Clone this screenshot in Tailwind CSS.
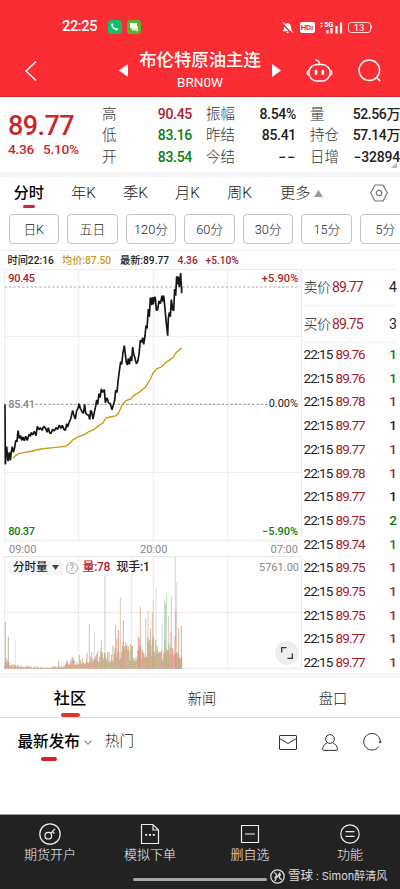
<!DOCTYPE html>
<html lang="zh-CN">
  <head>
    <meta charset="UTF-8" />
    <meta name="viewport" content="width=device-width, initial-scale=1.0" />
    <title>布伦特原油主连</title>
    <script src="https://cdn.jsdelivr.net/npm/@tailwindcss/browser@4"></script>
  </head>

  <body class="bg-white">
    <div class="w-[400px] h-[889px] flex flex-col overflow-hidden whitespace-nowrap text-[#222] font-[Roboto,'Noto_Sans_CJK_SC',sans-serif]">
      <!-- Header -->
      <header class="h-[97px] shrink-0 bg-[#fa2d34] text-white border-b border-[#d9252c]">
        <!-- Status bar -->
        <div class="h-[37px] pt-[17px] pl-[62px] pr-[28px] flex items-center">
          <span class="text-[14.5px] leading-5 font-medium tracking-[-0.35px] w-[46px]">22:25</span>
          <svg class="w-[14px] h-[14px]" viewBox="0 0 14 14">
            <rect width="14" height="14" rx="3.5" fill="#12c06a" />
            <path d="M4.3 3.2l1.3 1.6-.7 1.1c.5 1.1 1.3 1.9 2.5 2.5l1.1-.7 1.7 1.3c-.3 1.2-1.1 1.6-2.1 1.3C5.6 9.500 3.900 7.800 3.200 5.200 3 4.200 3.500 3.400 4.300 3.200z" fill="#fff" />
          </svg>
          <svg class="w-[14px] h-[14px] ml-[5px]" viewBox="0 0 14 14">
            <rect width="14" height="14" rx="3.5" fill="#55b82c" />
            <path d="M5 6h6v4.500h-.5V12L9 10.500H5z" fill="#d5f0c8" />
            <path d="M3 3h7v5H5.500L4 9.500V8H3z" fill="#fff" />
          </svg>
          <div class="ml-auto flex items-center">
            <svg class="w-[13px] h-[13px] mr-[6px]" viewBox="0 0 13 13">
              <path d="M1.500 10.300c1-1 1.500-2 1.500-4 0-2.300 1.400-4 3.500-4.200C8.600 2.300 10 4 10 6.300c0 2 .5 3 1.500 4z M5 11h3l-1.500 1.500z" fill="#fff" />
              <path d="M1 2.200l10 10.500" stroke="#fa2d34" stroke-width="1.600" />
              <path d="M1.500 1l10.500 10.500" stroke="#fff" />
            </svg>
            <span class="w-[15px] h-[11px] rounded-[2px] bg-white text-[#fa2d34] text-[8px] leading-[11px] font-bold tracking-[-0.4px] text-center mr-[5px]">HD<span class="text-[5px]">2</span></span>
            <svg class="w-[23px] h-[13px] mr-[5px]" viewBox="0 0 23 13">
              <path d="M0 3l1.500-2L3 3zM0 4.500l1.500 2 1.500-2z" fill="#fff" />
              <text x="4" y="6" font-size="7.500" font-weight="700" fill="#fff">5G</text>
              <path d="M7.500 12.500V9M11.500 12.500V7M16.500 12.500V5M21 12.500V1.500" stroke="#fff" stroke-width="2.200" />
            </svg>
            <span class="w-[23px] h-[11px] rounded-[3px] border border-white/80 text-[9.500px] leading-[9.500px] text-center">13</span>
            <span class="w-[1.500px] h-[4px] bg-white/80 rounded-r"></span>
          </div>
        </div>
        <!-- Title bar -->
        <div class="h-[59px] flex items-center pl-[25px] pr-[19px] pt-[8px]">
          <svg class="w-[12px] h-[20px]" viewBox="0 0 12 20" fill="none" stroke="#fff" stroke-width="1.500">
            <path d="M11 .5L1 10l10 9.500" />
          </svg>
          <svg class="w-[9px] h-[13px] ml-[82px]" viewBox="0 0 9 13"><path d="M9 0v13L0 6.500z" fill="#fff" /></svg>
          <div class="w-[144px] flex flex-col items-center -mt-[2px]">
            <h1 class="text-[17.400px] leading-6 font-medium">布伦特原油主连</h1>
            <p class="text-[13.500px] leading-[19px] mt-px">BRN0W</p>
          </div>
          <svg class="w-[9px] h-[13px]" viewBox="0 0 9 13"><path d="M0 0v13l9-6.500z" fill="#fff" /></svg>
          <svg class="w-[27px] h-[25px] ml-auto" viewBox="0 0 27 25" fill="none" stroke="#fff" stroke-width="1.500">
            <rect x="3" y="6.500" width="21" height="16.500" rx="8" />
            <path d="M3 12.500c-1.200 0-1.700 1-1.700 2.300s.5 2.300 1.700 2.300M24 12.500c1.200 0 1.700 1 1.700 2.300s-.5 2.300-1.700 2.300M13.500 6.500c0-3-1.200-4.200-4.200-4.700" />
            <path d="M10 12.700v3M16.800 12.700v3" stroke-width="2.600" stroke-linecap="round" />
          </svg>
          <svg class="w-[23px] h-[23px] ml-[25px]" viewBox="0 0 23 23" fill="none" stroke="#fff" stroke-width="1.500">
            <circle cx="11.300" cy="11.300" r="10.300" />
            <path d="M18.500 18.500l3.800 3.800" />
          </svg>
        </div>
      </header>

      <!-- Quote summary -->
      <section class="h-[76px] shrink-0 flex relative border-b border-[#f5f5f5]">
        <div class="w-[102px] pl-[8px] pt-[15px] text-[#c8282d]">
          <div class="text-[27px] leading-[28px] font-medium tracking-[-0.6px]">89.77</div>
          <div class="text-[13.700px] leading-[18px] font-medium tracking-[-0.3px] flex gap-[9px]"><span>4.36</span><span>5.10%</span></div>
        </div>
        <dl class="w-[90px] pt-[6.500px] grid grid-cols-[auto_auto] justify-between content-start text-[14px] leading-[21.500px]">
          <dt class="font-light text-[14.500px] text-[#333]">高</dt><dd class="text-right text-[#b3202a] font-medium tracking-[-0.3px]">90.45</dd>
          <dt class="font-light text-[14.500px] text-[#333]">低</dt><dd class="text-right text-[#0b7d14] font-medium tracking-[-0.3px]">83.16</dd>
          <dt class="font-light text-[14.500px] text-[#333]">开</dt><dd class="text-right text-[#0b7d14] font-medium tracking-[-0.3px]">83.54</dd>
        </dl>
        <dl class="w-[90px] ml-[14px] pt-[6.500px] grid grid-cols-[auto_auto] justify-between content-start text-[14px] leading-[21.500px]">
          <dt class="font-light text-[14.500px] text-[#333]">振幅</dt><dd class="text-right font-medium tracking-[-0.3px]">8.54%</dd>
          <dt class="font-light text-[14.500px] text-[#333]">昨结</dt><dd class="text-right font-medium tracking-[-0.3px]">85.41</dd>
          <dt class="font-light text-[14.500px] text-[#333]">今结</dt><dd class="text-right font-medium tracking-[1px]">−−</dd>
        </dl>
        <dl class="w-[90px] ml-[14px] pt-[6.500px] grid grid-cols-[auto_auto] justify-between content-start text-[14px] leading-[21.500px]">
          <dt class="font-light text-[14.500px] text-[#333]">量</dt><dd class="text-right font-medium tracking-[-0.4px]">52.56万</dd>
          <dt class="font-light text-[14.500px] text-[#333]">持仓</dt><dd class="text-right font-medium tracking-[-0.4px]">57.14万</dd>
          <dt class="font-light text-[14.500px] text-[#333]">日增</dt><dd class="text-right font-medium tracking-[-0.2px]">−32894</dd>
        </dl>
        <svg class="absolute right-[3px] bottom-[4px] w-[6px] h-[6px]" viewBox="0 0 6 6"><path d="M6 0v6H0z" fill="#bbb" /></svg>
      </section>
      <div class="h-[4px] shrink-0 bg-[#f6f6f6]"></div>

      <!-- Period tabs -->
      <nav class="h-[37px] shrink-0 flex items-start pl-[13.500px] pt-[5px] text-[15.300px] leading-[22px] font-light text-[#222]">
        <div class="w-[57.500px] font-medium text-black">
          <div>分时</div>
          <div class="w-[12px] h-[3px] rounded-full bg-[#d8232c] ml-[9.500px] mt-[1px]"></div>
        </div>
        <span class="w-[52px]">年K</span>
        <span class="w-[52px]">季K</span>
        <span class="w-[52px]">月K</span>
        <span class="w-[53px]">周K</span>
        <span>更多</span>
        <svg class="w-[9px] h-[7px] mt-[8px] ml-[3px]" viewBox="0 0 9 7"><path d="M4.500 0L9 7H0z" fill="#999" /></svg>
        <svg class="w-[18px] h-[18px] ml-auto mr-[12px] mt-[2px]" viewBox="0 0 18 18" fill="none" stroke="#777" stroke-width="1.200">
          <path d="M5 1h8l4.300 8L13 17H5L.7 9z" stroke-linejoin="round" />
          <circle cx="9" cy="9" r="2.700" />
        </svg>
      </nav>
      <div class="h-[36px] shrink-0 flex items-start gap-[8px] pl-[8.500px] text-[12.700px] leading-[29px] text-center font-light">
        <span class="w-[50.600px] h-[30px] shrink-0 border border-[#c4c4c4] rounded-[4px]">日K</span>
        <span class="w-[50.600px] h-[30px] shrink-0 border border-[#c4c4c4] rounded-[4px]">五日</span>
        <span class="w-[50.600px] h-[30px] shrink-0 border border-[#c4c4c4] rounded-[4px]">120分</span>
        <span class="w-[50.600px] h-[30px] shrink-0 border border-[#c4c4c4] rounded-[4px]">60分</span>
        <span class="w-[50.600px] h-[30px] shrink-0 border border-[#c4c4c4] rounded-[4px]">30分</span>
        <span class="w-[50.600px] h-[30px] shrink-0 border border-[#c4c4c4] rounded-[4px]">15分</span>
        <span class="w-[50.600px] h-[30px] shrink-0 border border-[#c4c4c4] rounded-[4px]">5分</span>
      </div>
      <div class="h-[19px] shrink-0 border-t border-[#eee] flex items-center pl-[7.500px] pt-[2px] text-[10.200px] leading-4 font-medium">
        <span class="w-[54.500px]">时间22:16</span>
        <span class="w-[58px] text-[#c99a1c]">均价:87.50</span>
        <span class="w-[57.500px]">最新:89.77</span>
        <span class="w-[28px] text-[#a52228]">4.36</span>
        <span class="text-[#a52228]">+5.10%</span>
      </div>

      <!-- Charts and trade list -->
      <section class="h-[404px] shrink-0 flex">
        <div class="w-[302px]">
          <svg class="block w-[302px] h-[272px]" viewBox="0 12 906 816" fill="none">
            <path d="M14 13.500H906M14 214H906M14 418H906M14 622H906M14 826H906M14 12V828M236 12V828M460 12V828M683 12V828M904.500 12V828" stroke="#ececec" stroke-width="3" />
            <path d="M14 66H896" stroke="#b3a893" stroke-width="3" stroke-dasharray="7 6" />
            <path d="M104 418H896" stroke="#fff" stroke-width="4" />
            <path d="M106 418H806" stroke="#8c8c8c" stroke-width="3" stroke-dasharray="7 6" />
            <path d="M38 580L48 571 56 566 75 562 98 558 122 552 160 548 196 544 207 537 218 525 236 515 254 508 268 499 283 493 298 481 310 473 317 459 330 456 347 453 356 444 366 420 378 407 392 402 402 391 417 382 436 367 450 344 460 323 471 311 484 306 498 292 520 277 528 263 545 248" stroke="#c59a14" stroke-width="4" />
            <path d="M15 418L16 598 20 545 24 588 28 562 31 586 34 560 37 545 40 562 44 548 47 527 51 530 54 497 58 520 62 512 65 526 69 516 73 527 77 514 82 526 87 508 91 514 94 502 98 510 103 499 108 512 112 484 117 494 121 488 126 496 131 484 137 490 141 502 145 488 149 504 153 505 158 493 163 498 168 488 173 493 178 480 183 490 187 481 192 493 196 496 200 476 203 486 208 470 212 462 218 436 222 452 226 462 230 437 234 430 237 416 241 430 246 440 250 445 254 418 257 444 262 450 266 450 269 464 272 436 275 441 279 462 283 442 287 424 290 405 293 418 297 386 300 398 304 372 308 382 313 374 316 413 321 398 326 414 331 416 336 434 340 420 344 406 347 376 351 382 354 350 358 318 362 290 365 298 369 262 373 242 376 268 379 292 382 300 385 280 388 298 392 274 395 288 398 246 401 266 405 280 409 296 413 290 417 268 421 226 425 232 428 218 431 238 435 213 438 182 441 190 445 132 448 155 451 98 455 120 457 96 460 118 463 96 466 98 469 136 473 134 477 108 481 116 486 92 489 110 491 92 494 120 498 166 503 212 505 160 508 142 511 155 514 104 518 134 521 137 524 72 527 92 530 34 533 58 535 35 538 66 542 24 545 85 545 66" stroke="#151515" stroke-width="5" stroke-linejoin="bevel" />
            <g font-size="33" font-weight="500">
              <text x="25" y="51" fill="#b3202a" textLength="80">90.45</text>
              <text x="785" y="51" fill="#b3202a" textLength="110">+5.90%</text>
              <text x="25" y="428" fill="#888" textLength="80">85.41</text>
              <text x="806" y="426" fill="#222" font-weight="400" textLength="88">0.00%</text>
              <text x="25" y="810" fill="#0b7d14" textLength="80">80.37</text>
              <text x="786" y="810" fill="#0b7d14" textLength="108">−5.90%</text>
            </g>
          </svg>
          <div class="h-[15px] pl-[9px] pr-[4px] pt-[2px] flex items-center text-[11px] leading-[15px] text-[#888]">
            <span class="w-[131px]">09:00</span><span>20:00</span><span class="ml-auto">07:00</span>
          </div>
          <div class="relative h-[113px]">
            <svg class="block w-[302px] h-[113px]" viewBox="0 288 906 339" fill="none">
              <path d="M14 289.500H906M14 457H906M14 625H906M14 288V627M236 288V627M460 288V627M683 288V627M904.500 288V627" stroke="#e9e9e9" stroke-width="3" />
              <g id="volume"></g>
            </svg>
            <div class="absolute inset-x-0 top-[4px] h-[15px] pl-[9px] pr-[3px] flex items-center text-[12px] leading-[15px] font-medium">
              <span class="w-[53.500px] h-[15px] pl-[4px] rounded-[2px] bg-[#f5f5f5] flex items-center justify-between pr-[4px] text-[11.500px] text-[#222]">分时量
                <svg class="w-[7px] h-[5px]" viewBox="0 0 7 5"><path d="M0 0h7L3.500 5z" fill="#444" /></svg>
              </span>
              <span class="w-[12px] h-[12px] ml-[3.500px] rounded-full border border-[#aaa] text-[9px] leading-[10.500px] font-normal text-[#888] text-center">?</span>
              <span class="ml-[4.500px] w-[34px] text-[#b3202a] tracking-[-0.3px]">量:78</span>
              <span class="tracking-[-0.2px]">现手:1</span>
              <span class="ml-auto font-normal text-[11px] text-[#888]">5761.00</span>
            </div>
            <div class="absolute right-[3px] bottom-[4px] w-[24px] h-[24px] rounded-full bg-[#eee] flex items-center justify-center">
              <svg class="w-[12px] h-[12px]" viewBox="0 0 12 12" fill="none" stroke="#333" stroke-width="1.300"><path d="M.7 5.500V.7h4.800M11.300 6.500v4.800H6.500" /></svg>
            </div>
          </div>
        </div>

        <!-- Bid, ask and ticks -->
        <div class="w-[98px] pl-[1.500px] pr-[4px]">
          <div class="h-[37px] border-y border-[#f0f0f0] flex items-center text-[14px] tracking-[-0.9px]">
            <span class="w-[28.500px] font-light tracking-[-0.5px]">卖价</span><span class="text-[#a52228]">89.77</span><span class="ml-auto">4</span>
          </div>
          <div class="h-[37px] border-b border-[#f0f0f0] flex items-center text-[14px] tracking-[-0.9px]">
            <span class="w-[28.500px] font-light tracking-[-0.5px]">买价</span><span class="text-[#a52228]">89.75</span><span class="ml-auto">3</span>
          </div>
          <div id="ticks" class="text-[13.500px] leading-[23.700px] tracking-[-0.95px]"></div>
        </div>
      </section>
      <div class="h-[5px] shrink-0 bg-[#f6f6f6]"></div>

      <!-- Community tabs -->
      <nav class="h-[40px] shrink-0 border-b border-[#ddd] grid grid-cols-[140px_124px_136px] text-center pt-[9px] leading-[24px] text-[14.300px] font-light">
        <div class="font-medium text-[16.200px] text-black">
          <div>社区</div>
          <div class="w-[19px] h-[4px] mx-auto mt-[2px] rounded-full bg-[#e0322f]"></div>
        </div>
        <span>新闻</span>
        <span class="pl-[2px]">盘口</span>
      </nav>
      <div class="h-[96px] shrink-0 flex items-start pl-[17.500px] pr-[18px] pt-[12px] leading-[24px]">
        <div class="font-medium text-[15.600px] text-black">
          <div class="flex items-center">最新发布
            <svg class="w-[8px] h-[5px] ml-[4px]" viewBox="0 0 8 5" fill="none" stroke="#555"><path d="M.3.500L4 4.300 7.700.5" /></svg>
          </div>
          <div class="w-[16px] h-[4px] ml-[23px] mt-[3px] rounded-full bg-[#d5202f]"></div>
        </div>
        <span class="ml-[13px] text-[14.500px] font-light">热门</span>
        <div class="ml-auto flex items-center gap-[25px] mt-[3px]">
          <svg class="w-[18px] h-[15px]" viewBox="0 0 18 15" fill="none" stroke="#333"><rect x=".5" y=".5" width="17" height="14" rx=".5" /><path d="M.5 3.500L9 8.500l8.500-5" /></svg>
          <svg class="w-[16px] h-[17px]" viewBox="0 0 16 17" fill="none" stroke="#333"><circle cx="8" cy="5" r="4.400" /><path d="M5.300 8.800C2.300 10 .6 12.500.6 15.200c0 .8.400 1.200 1.200 1.200h12.400c.8 0 1.200-.4 1.200-1.200 0-2.700-1.700-5.200-4.700-6.400" /></svg>
          <svg class="w-[19px] h-[18px]" viewBox="0 0 19 18" fill="none" stroke="#333"><path d="M15.800 13.500A8.300 8.300 0 1 1 17.300 9" /><path d="M15.300 8.500h3.500l-1.700 2z" fill="#333" stroke="none" /></svg>
        </div>
      </div>

      <!-- Bottom bar -->
      <footer class="h-[75px] shrink-0 bg-[#222] border-t border-[#999] text-[#eee] relative">
        <div class="grid grid-cols-4 pt-[8px] text-[13px] leading-[18px] font-light">
          <div class="flex flex-col items-center">
            <svg class="w-[22px] h-[22px]" viewBox="0 0 22 22" fill="none" stroke="#eee" stroke-width="1.200"><circle cx="11" cy="11" r="10.200" /><circle cx="9.300" cy="12.700" r="3.300" /><path d="M11.600 10.300L16 5.800M13.300 8.500l2 2" /></svg>
            <span class="mt-px">期货开户</span>
          </div>
          <div class="flex flex-col items-center">
            <svg class="w-[22px] h-[22px]" viewBox="0 0 22 22" fill="none" stroke="#eee" stroke-width="1.200"><path d="M2.500 1.500H14l5.500 5.500v13.500h-17zM14 1.500V7h5.500" /><path d="M6.200 11.800h2M10 11.800h2M13.800 11.800h2" stroke-width="1.800" /></svg>
            <span class="mt-px">模拟下单</span>
          </div>
          <div class="flex flex-col items-center">
            <svg class="w-[22px] h-[22px]" viewBox="0 0 22 22" fill="none" stroke="#eee" stroke-width="1.200"><path d="M2.500 2.500h17v17h-17zM6 11h10" /></svg>
            <span class="mt-px">删自选</span>
          </div>
          <div class="flex flex-col items-center">
            <svg class="w-[22px] h-[22px]" viewBox="0 0 22 22" fill="none" stroke="#eee" stroke-width="1.200"><circle cx="11" cy="11" r="9.200" /><path d="M6.500 8.700h9M6.500 13.300h9" /></svg>
            <span class="mt-px">功能</span>
          </div>
        </div>
        <div class="absolute left-[133px] bottom-[8px] w-[134px] h-[3px] rounded-full bg-[#a5a5a5]"></div>
        <div class="absolute left-[270px] bottom-[5px] h-[16px] flex items-center text-[11.500px] leading-4 text-[#ddd]">
          <svg class="w-[15px] h-[15px] mr-[3px]" viewBox="0 0 15 15" fill="none" stroke="#ddd" stroke-width="1.300"><circle cx="7.500" cy="7.500" r="6.700" /><path d="M4 3.500c3.200 1 3.200 3.500.5 5.500M5 12c.5-3.500 3-4 5-8.500M10.800 5c-2.700 2.500-1.300 5 1 5.500" /></svg>
          <span class="text-[12.500px]">雪球</span><span class="mx-[3px]">:</span><span class="font-[Inter,'Noto_Sans_CJK_SC',sans-serif] text-[11px]">Simon醉清风</span>
        </div>
      </footer>
    </div>

    <script>
      // Latest trades: price, size, size colour
      const ticks = [
        ["89.76", 1, "text-[#0b7d14]"],
        ["89.76", 1, "text-[#0b7d14]"],
        ["89.78", 1, "text-[#a52228]"],
        ["89.77", 1, "text-[#222]"],
        ["89.77", 1, "text-[#a52228]"],
        ["89.78", 1, "text-[#a52228]"],
        ["89.77", 1, "text-[#222]"],
        ["89.75", 2, "text-[#0b7d14]"],
        ["89.74", 1, "text-[#0b7d14]"],
        ["89.75", 1, "text-[#a52228]"],
        ["89.75", 1, "text-[#a52228]"],
        ["89.75", 1, "text-[#a52228]"],
        ["89.77", 1, "text-[#a52228]"],
        ["89.77", 1, "text-[#a52228]"],
      ];
      document.getElementById("ticks").innerHTML = ticks
        .map(
          ([price, size, color]) =>
            `<div class="flex"><span class="w-[32px]">22:15</span><span class="text-[#a52228]">${price}</span><span class="ml-auto font-medium ${color}">${size}</span></div>`
        )
        .join("");

      // Volume bars: envelope [x, height] with noise, then the tall spikes
      const envelope = [
        [15, 60], [30, 16], [60, 12], [120, 6], [190, 8], [200, 35], [235, 40],
        [280, 55], [330, 60], [350, 95], [380, 90], [400, 70], [430, 105],
        [460, 130], [480, 60], [500, 120], [530, 120], [546, 85],
      ];
      const spikes = [
        [16, 140, "#b5aa83"], [25, 96, "#b5aa83"], [46, 86, "#d5dfda"], [176, 24, "#b5aa83"],
        [268, 134, "#c9b8a8"], [283, 108, "#c9d9c9"], [304, 85, "#c9a890"], [315, 280, "#c5c2ae"],
        [347, 132, "#c9a890"], [355, 116, "#e98c84"], [361, 214, "#dfb9ac"], [370, 146, "#c9a890"],
        [395, 336, "#deded6"], [415, 96, "#e98c84"], [418, 90, "#e98c84"], [421, 186, "#dfa89c"],
        [437, 150, "#c9b8a8"], [444, 176, "#dfb9ac"], [457, 168, "#e0a69b"], [460, 208, "#cfc9bd"],
        [468, 244, "#d8d3d3"], [486, 136, "#c9d9c9"], [494, 210, "#a5d3a5"], [497, 196, "#93cc96"],
        [500, 222, "#b5d8b3"], [506, 158, "#dfb9ac"], [514, 216, "#dfb9ac"], [526, 336, "#ddc8c4"],
        [528, 174, "#c98d76"], [530, 258, "#dcd0c6"], [536, 120, "#c9a890"], [544, 128, "#b5aa83"],
      ];
      const tones = ["#c3a47c", "#b4aa7e", "#d69880", "#e3958a", "#b9b17f", "#cf9d7c"];
      let seed = 7;
      const rand = () => (seed = (seed * 16807) % 2147483647) / 2147483647;
      const bar = (x, h, color) =>
        `<path d="M${x} 626V${(626 - h).toFixed(1)}" stroke="${color}" stroke-width="2.500"/>`;

      let bars = spikes.map((s) => bar(...s)).join("");
      for (let x = 15; x < 546; x += 2) {
        const i = envelope.findIndex((p) => p[0] > x);
        const [x0, h0] = envelope[i - 1];
        const [x1, h1] = envelope[i];
        const top = h0 + ((h1 - h0) * (x - x0)) / (x1 - x0);
        const h = top * (0.3 + 0.7 * Math.pow(rand(), 2.2));
        bars += bar(x, h, tones[Math.floor(rand() * tones.length)]);
      }
      document.getElementById("volume").innerHTML = bars;
    </script>
  </body>
</html>
